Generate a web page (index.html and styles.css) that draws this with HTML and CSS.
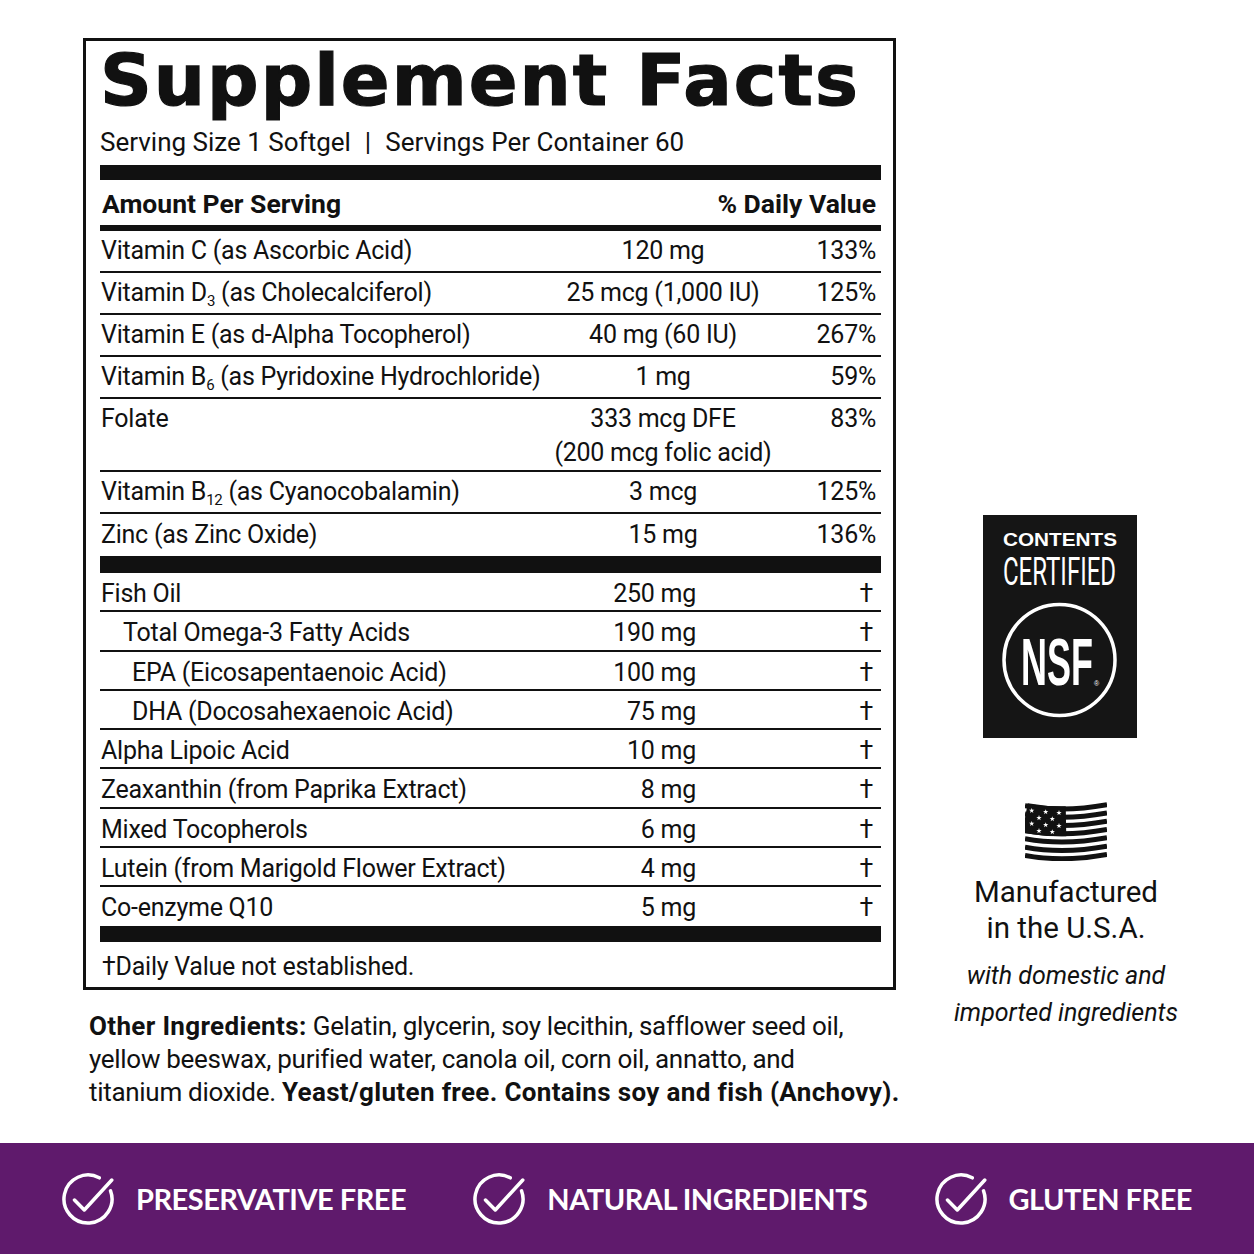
FILE: index.html
```html
<!DOCTYPE html>
<html lang="en">
<head>
<meta charset="utf-8">
<title>Supplement Facts</title>
<link rel="stylesheet" href="styles.css">
</head>
<body>
<div class="page">
  <div class="main">
    <div class="left">
      <div class="facts">
        <h1 class="title">Supplement Facts</h1>
        <div class="serving">Serving Size 1 Softgel<span class="pipe">|</span>Servings Per Container 60</div>
        <div class="bar b15"></div>
        <div class="head"><span>Amount Per Serving</span><span>% Daily Value</span></div>
        <div class="bar b6"></div>
        <div class="sec1">
          <div class="row"><span class="nm">Vitamin C (as Ascorbic Acid)</span><span class="amt">120 mg</span><span class="dv">133%</span></div>
          <div class="row"><span class="nm">Vitamin D<span class="sub">3</span> (as Cholecalciferol)</span><span class="amt">25 mcg (1,000 IU)</span><span class="dv">125%</span></div>
          <div class="row"><span class="nm">Vitamin E (as d-Alpha Tocopherol)</span><span class="amt">40 mg (60 IU)</span><span class="dv">267%</span></div>
          <div class="row"><span class="nm">Vitamin B<span class="sub">6</span> (as Pyridoxine Hydrochloride)</span><span class="amt">1 mg</span><span class="dv">59%</span></div>
          <div class="row folate"><span class="nm">Folate</span><span class="amt">333 mcg DFE<br>(200 mcg folic acid)</span><span class="dv">83%</span></div>
          <div class="row"><span class="nm">Vitamin B<span class="sub">12</span> (as Cyanocobalamin)</span><span class="amt">3 mcg</span><span class="dv">125%</span></div>
          <div class="row end"><span class="nm">Zinc (as Zinc Oxide)</span><span class="amt">15 mg</span><span class="dv">136%</span></div>
        </div>
        <div class="bar b17"></div>
        <div class="sec2">
          <div class="row"><span class="nm">Fish Oil</span><span class="amt">250 mg</span><span class="dv">†</span></div>
          <div class="row"><span class="nm in1">Total Omega-3 Fatty Acids</span><span class="amt">190 mg</span><span class="dv">†</span></div>
          <div class="row"><span class="nm in2">EPA (Eicosapentaenoic Acid)</span><span class="amt">100 mg</span><span class="dv">†</span></div>
          <div class="row"><span class="nm in2">DHA (Docosahexaenoic Acid)</span><span class="amt">75 mg</span><span class="dv">†</span></div>
          <div class="row"><span class="nm">Alpha Lipoic Acid</span><span class="amt">10 mg</span><span class="dv">†</span></div>
          <div class="row"><span class="nm">Zeaxanthin (from Paprika Extract)</span><span class="amt">8 mg</span><span class="dv">†</span></div>
          <div class="row"><span class="nm">Mixed Tocopherols</span><span class="amt">6 mg</span><span class="dv">†</span></div>
          <div class="row"><span class="nm">Lutein (from Marigold Flower Extract)</span><span class="amt">4 mg</span><span class="dv">†</span></div>
          <div class="row"><span class="nm">Co-enzyme Q10</span><span class="amt">5 mg</span><span class="dv">†</span></div>
        </div>
        <div class="bar b16"></div>
        <div class="foot">†Daily Value not established.</div>
      </div>
      <p class="other"><b>Other Ingredients:</b> Gelatin, glycerin, soy lecithin, safflower seed oil,<br>yellow beeswax, purified water, canola oil, corn oil, annatto, and<br>titanium dioxide. <b>Yeast/gluten free. Contains soy and fish (Anchovy).</b></p>
    </div>
    <div class="right">
      <svg class="badge" viewBox="0 0 154 223" width="154" height="223">
        <rect width="154" height="223" fill="#151515"/>
        <text class="b-contents" x="20" y="31" textLength="114" lengthAdjust="spacingAndGlyphs">CONTENTS</text>
        <text class="b-cert" transform="translate(20 70) scale(0.615 1)" x="0" y="0">CERTIFIED</text>
        <circle cx="76.5" cy="145" r="55.5" fill="none" stroke="#fff" stroke-width="3.5"/>
        <text class="b-nsf" transform="translate(38 170) scale(0.545 1)" x="0" y="0">NSF</text>
        <text class="b-reg" x="111" y="171">®</text>
      </svg>
      <svg class="flag" viewBox="0 0 82 59" width="82" height="59">
        <defs>
          <polygon id="st" points="0,-2.8 0.66,-0.91 2.66,-0.87 1.06,0.35 1.65,2.27 0,1.12 -1.65,2.27 -1.06,0.35 -2.66,-0.87 -0.66,-0.91" fill="#fff"/>
        </defs>
        <g fill="none" stroke="#111" stroke-width="5">
          <path d="M0 3.6 C27 8.6 55 7.6 82 2.6"/>
          <path d="M0 11.9 C27 16.9 55 15.9 82 10.9"/>
          <path d="M0 20.2 C27 25.2 55 24.2 82 19.2"/>
          <path d="M0 28.5 C27 33.5 55 32.5 82 27.5"/>
          <path d="M0 36.8 C27 41.8 55 40.8 82 35.8"/>
          <path d="M0 45.1 C27 50.1 55 49.1 82 44.1"/>
          <path d="M0 53.4 C27 58.4 55 57.4 82 52.4"/>
        </g>
        <path d="M0 16.05 C13.5 18.55 27.25 19.55 41 19.3" fill="none" stroke="#111" stroke-width="30"/>
        <use href="#st" x="6.7" y="8.7"/>
        <use href="#st" x="20.7" y="10"/>
        <use href="#st" x="34" y="10.8"/>
        <use href="#st" x="14" y="15.9"/>
        <use href="#st" x="27.3" y="17"/>
        <use href="#st" x="6.7" y="21.7"/>
        <use href="#st" x="20.7" y="23"/>
        <use href="#st" x="34" y="23.8"/>
        <use href="#st" x="14" y="28.9"/>
        <use href="#st" x="27.3" y="30"/>
      </svg>
      <div class="made">Manufactured<br>in the U.S.A.</div>
      <div class="imported">with domestic and<br>imported ingredients</div>
    </div>
  </div>
  <div class="strip">
    <div class="item">
      <svg class="chk" viewBox="0 0 52 54" width="52" height="54"><path d="M48.55 18.79 A24 24 0 1 1 37.27 5.81" fill="none" stroke="#fff" stroke-width="3.5" stroke-linecap="round"/><path d="M12.5 28 L22.3 38 L49.8 8" fill="none" stroke="#fff" stroke-width="3.5" stroke-linecap="round" stroke-linejoin="round"/></svg>
      <span>PRESERVATIVE FREE</span>
    </div>
    <div class="item">
      <svg class="chk" viewBox="0 0 52 54" width="52" height="54"><path d="M48.55 18.79 A24 24 0 1 1 37.27 5.81" fill="none" stroke="#fff" stroke-width="3.5" stroke-linecap="round"/><path d="M12.5 28 L22.3 38 L49.8 8" fill="none" stroke="#fff" stroke-width="3.5" stroke-linecap="round" stroke-linejoin="round"/></svg>
      <span>NATURAL INGREDIENTS</span>
    </div>
    <div class="item">
      <svg class="chk" viewBox="0 0 52 54" width="52" height="54"><path d="M48.55 18.79 A24 24 0 1 1 37.27 5.81" fill="none" stroke="#fff" stroke-width="3.5" stroke-linecap="round"/><path d="M12.5 28 L22.3 38 L49.8 8" fill="none" stroke="#fff" stroke-width="3.5" stroke-linecap="round" stroke-linejoin="round"/></svg>
      <span>GLUTEN FREE</span>
    </div>
  </div>
</div>
</body>
</html>
```

FILE: styles.css
```css
html, body {
  margin: 0;
  padding: 0;
  background: #fff;
}
body {
  font-family: Roboto, "Liberation Sans", sans-serif;
  color: #111;
}
.page {
  width: 1254px;
  height: 1254px;
  display: flex;
  flex-direction: column;
  overflow: hidden;
}
.main {
  flex: 1;
  display: flex;
  padding: 38px 0 0 83px;
}
.left {
  width: 813px;
  flex: none;
}
.facts {
  width: 813px;
  box-sizing: border-box;
  border: 3px solid #111;
  padding: 0 12px 0 14px;
}
.title {
  margin: 3px 0 0 0;
  font-family: "DejaVu Sans", sans-serif;
  font-weight: 700;
  font-size: 72px;
  line-height: 72px;
  letter-spacing: 2px;
  -webkit-text-stroke: 1.2px #111;
  white-space: nowrap;
}
.serving {
  margin-top: 11px;
  font-size: 26px;
  line-height: 30px;
  white-space: nowrap;
}
.pipe {
  margin: 0 14px;
}
.bar {
  background: #111;
}
.b15 { height: 15px; margin-top: 8px; }
.b6 { height: 6px; }
.b17 { height: 17px; }
.b16 { height: 16px; }
.head {
  display: flex;
  justify-content: space-between;
  font-weight: 700;
  font-size: 26.5px;
  line-height: 30px;
  padding: 9px 5px 6px 2px;
}
.row {
  display: grid;
  grid-template-columns: 1fr 240px 98px;
  font-size: 25px;
  white-space: nowrap;
  letter-spacing: -0.25px;
  border-bottom: 2px solid #111;
}
.nm { padding-left: 1px; }
.sub {
  font-size: 0.6em;
  vertical-align: -0.3em;
  line-height: 0;
}
.sec1 .row { line-height: 40px; }
.sec1 .amt { text-align: center; }
.dv { text-align: right; padding-right: 5px; }
.sec1 .row.folate { line-height: 34px; padding-top: 3px; }
.sec1 .row.end { line-height: 42px; border-bottom: none; }
.sec2 .row { padding-top: 5px; line-height: 32.3px; }
.sec2 .row:last-child { border-bottom: none; padding-bottom: 1px; }
.sec2 .amt { text-align: right; padding-right: 87px; }
.sec2 .dv { padding-right: 8px; }
.in1 { padding-left: 23px; }
.in2 { padding-left: 32px; }
.foot {
  padding: 10px 0 5px 2px;
  font-size: 25px;
  line-height: 30px;
  letter-spacing: -0.25px;
}
.other {
  margin: 20px 0 0 6px;
  font-size: 26px;
  line-height: 33px;
  white-space: nowrap;
  letter-spacing: -0.3px;
}
.other b {
  font-weight: 700;
  letter-spacing: 0.35px;
}
.right {
  width: 340px;
  flex: none;
  display: flex;
  flex-direction: column;
  align-items: center;
  padding-top: 477px;
}
.badge {
  display: block;
  margin-right: 12px;
}
.b-contents {
  font-family: "Liberation Sans", sans-serif;
  font-weight: 700;
  font-size: 19px;
  fill: #fff;
}
.b-cert {
  font-family: Roboto, sans-serif;
  font-weight: 400;
  font-size: 39px;
  fill: #fff;
}
.b-nsf {
  font-family: "Liberation Sans", sans-serif;
  font-weight: 700;
  font-size: 66px;
  fill: #fff;
}
.b-reg {
  font-family: "Liberation Sans", sans-serif;
  font-size: 7px;
  fill: #fff;
}
.flag {
  display: block;
  margin-top: 64px;
}
.made {
  margin-top: 13px;
  font-size: 29.5px;
  line-height: 36px;
  text-align: center;
}
.imported {
  margin-top: 11px;
  font-style: italic;
  font-size: 25px;
  line-height: 37px;
  text-align: center;
}
.strip {
  flex: none;
  height: 111px;
  box-sizing: border-box;
  background: #5f1a6c;
  display: flex;
  align-items: center;
  justify-content: space-between;
  padding: 0 62px;
}
.item {
  display: flex;
  align-items: center;
  gap: 22px;
  color: #fff;
  font-family: Lato, "Open Sans", sans-serif;
  font-weight: 700;
  font-size: 29px;
  letter-spacing: -0.5px;
  white-space: nowrap;
}
.chk { display: block; }
```
